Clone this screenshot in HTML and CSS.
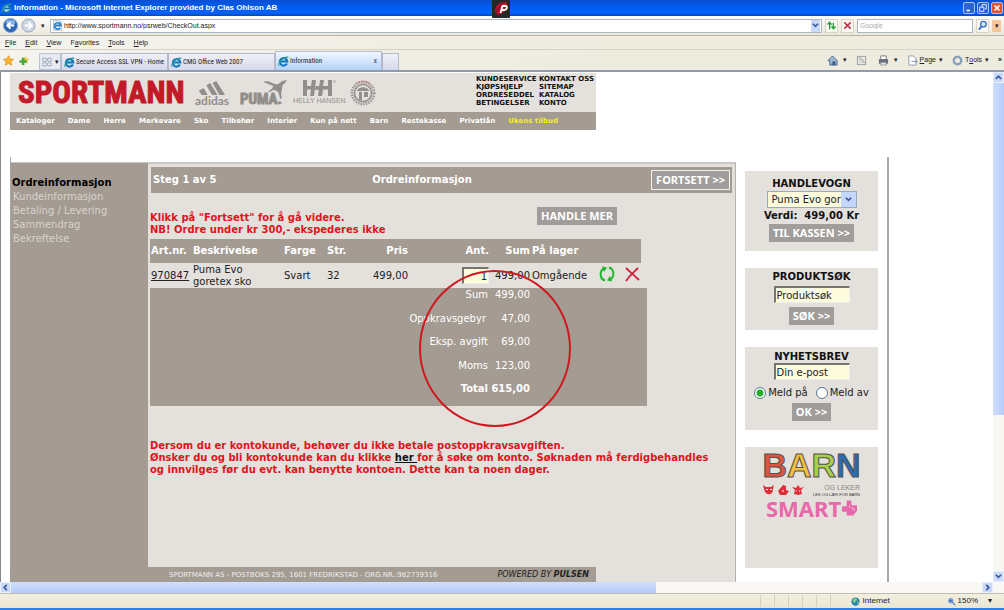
FILE: index.html
```html
<!DOCTYPE html>
<html lang="no">
<head>
<meta charset="utf-8">
<title>Information</title>
<link rel="stylesheet" href="styles.css">
</head>
<body>
<svg class="defs" aria-hidden="true">
  <symbol id="ie" viewBox="0 0 16 16"><path d="M2 1h9l3 3v11H2z" fill="#fff" stroke="#9aa9b8"/><path d="M12 11.2a4.600 4.600 0 1 1 .8-3.200H4.500" fill="none" stroke="#2382c9" stroke-width="2.600"/><path d="M2 12C4 6 10 2 14 3" fill="none" stroke="#5bb4e8" stroke-width="1.200"/></symbol>
  <symbol id="ie-tab" viewBox="0 0 16 16"><circle cx="8" cy="8.500" r="6" fill="#bfe4f7"/><path d="M13 11a5.500 5.500 0 1 1 .6-3H4" fill="none" stroke="#1675b9" stroke-width="3"/><path d="M1 14C1 8 10 0 15 2" fill="none" stroke="#2b9a9a" stroke-width="1.600"/></symbol>
  <symbol id="caret" viewBox="0 0 8 8"><path d="M1 2l3 3 3-3" fill="none" stroke="#3a5a9a" stroke-width="2"/></symbol>
</svg>

<header class="titlebar">
  <svg class="i12"><use href="#ie-tab"/></svg>
  <span class="titlebar-text">Information - Microsoft Internet Explorer provided by Clas Ohlson AB</span>
  <span class="titlebar-buttons">
    <button class="win" aria-label="Minimize"><svg viewBox="0 0 12 12"><path d="M3 9h4" stroke="#fff" stroke-width="2"/></svg></button>
    <button class="win" aria-label="Restore"><svg viewBox="0 0 12 12"><path d="M5 5V2h5v5H8M2 5h5v5H2z" fill="none" stroke="#fff"/></svg></button>
    <button class="win close" aria-label="Close"><svg viewBox="0 0 12 12"><path d="M3 3l6 6M9 3l-6 6" stroke="#fff" stroke-width="2"/></svg></button>
  </span>
  <svg class="badge" viewBox="0 0 18 18"><rect width="18" height="18" rx="1" fill="#25272b"/><path d="M4 14C1 8 6 2 13 2c3 0 3 5 0 9-3 3-6 4-9 3z" fill="#b5122c"/><path d="M4 13c2-5 5-9 9-11" stroke="#6d0d1c" fill="none"/><path d="M8.500 13l2-7h3c2.500 0 1.500 4-1 4h-2.500" fill="none" stroke="#fff" stroke-width="1.800"/></svg>
</header>

<div class="address-row">
  <button class="nav-back" aria-label="Back"><svg viewBox="0 0 16 16"><circle cx="8" cy="8" r="7.500" fill="#2a66b4" stroke="#88a8d0"/><ellipse cx="8" cy="4.500" rx="5" ry="3" fill="#7fb0e6"/><path d="M12 8H5M8 4.500L4.500 8 8 11.500" fill="none" stroke="#fff" stroke-width="2"/></svg></button>
  <button class="nav-back" aria-label="Forward"><svg viewBox="0 0 16 16"><circle cx="8" cy="8" r="7" fill="#cfd7e4" stroke="#94a4bc"/><path d="M4 8h7M8 4.500L11.500 8 8 11.500" fill="none" stroke="#fff" stroke-width="2"/></svg></button>
  <button class="drop" aria-label="Recent pages">▾</button>
  <div class="address">
    <svg class="i12"><use href="#ie"/></svg>
    <input class="address-input" aria-label="Address" value="http://www.sportmann.no/psrweb/CheckOut.aspx">
    <button class="caret-button" aria-label="Show addresses"><svg viewBox="0 0 8 8"><use href="#caret"/></svg></button>
  </div>
  <button class="tool" aria-label="Refresh"><svg viewBox="0 0 12 12"><path d="M4 10V3M1.500 5L4 2.500 6 5M8 3v6M6 7l2 2.500L10.500 7" fill="none" stroke="#2f9a3a" stroke-width="1.500"/></svg></button>
  <button class="tool" aria-label="Stop"><svg viewBox="0 0 12 12"><path d="M2.500 2.500l7 7M9.500 2.500l-7 7" stroke="#c8324a" stroke-width="1.800"/></svg></button>
  <input class="search" aria-label="Search" placeholder="Google">
  <button class="tool" aria-label="Search web"><svg viewBox="0 0 12 12"><circle cx="7" cy="4.500" r="3" fill="#d7e8fb" stroke="#3a6fc4" stroke-width="1.500"/><path d="M5 7L2 10.500" stroke="#3a6fc4" stroke-width="2"/></svg></button>
  <button class="orange" aria-label="Search options">▾</button>
</div>

<nav class="menu-row" aria-label="Menu">
  <button><u>F</u>ile</button><button><u>E</u>dit</button><button><u>V</u>iew</button><button>F<u>a</u>vorites</button><button><u>T</u>ools</button><button><u>H</u>elp</button>
</nav>

<div class="tab-row">
  <div class="favs">
    <svg viewBox="0 0 12 12"><path d="M6 .8l1.600 3.500 3.900.4-2.900 2.600.8 3.900L6 9.200l-3.400 2 .8-3.900L.5 4.700l3.900-.4z" fill="#fdb62c" stroke="#d88a17" stroke-width=".8"/></svg>
    <svg viewBox="0 0 12 12"><path d="M7 .8l1.300 3 3.200.3-2.400 2.200.7 3.200L7 8 4.200 9.500l.7-3.200L2.500 4.100l3.200-.3z" fill="#f6c945"/><path d="M4.500 3v8M.5 7h8" stroke="#43a63c" stroke-width="2.800"/></svg>
  </div>
  <div class="quick"><svg viewBox="0 0 12 12"><path d="M1 1.500h4v3.500H1zM7 1.500h4v3.500H7zM1 7h4v3.500H1zM7 7h4v3.500H7z" fill="#fff" stroke="#8d9ab0"/></svg><span>▾</span></div>
  <button class="tab"><svg class="i12"><use href="#ie-tab"/></svg>Secure Access SSL VPN - Home</button>
  <button class="tab"><svg class="i12"><use href="#ie-tab"/></svg>CMG Office Web 2007</button>
  <button class="tab active"><svg class="i12"><use href="#ie-tab"/></svg>Information<span class="tab-close">x</span></button>
  <button class="tab new" aria-label="New tab"></button>
  <div class="commands">
    <button aria-label="Home"><svg viewBox="0 0 12 12"><path d="M1 6l5-5 5 5v5H3V6z" fill="#9db7d4" stroke="#4a6587"/><path d="M6 7h3v4H6z" fill="#32577f"/></svg><span>▾</span></button>
    <button class="faded" aria-label="Feeds"><svg viewBox="0 0 12 12"><rect x="1.500" y="1.500" width="9" height="9" fill="#eee" stroke="#888"/><path d="M3 5c3 0 4 2 4 4M3 3c4 0 6 3 6 6M3.500 8.500h1" fill="none" stroke="#888"/></svg></button>
    <button aria-label="Print"><svg viewBox="0 0 12 12"><path d="M3 1h6v4H3z" fill="#fff" stroke="#777"/><path d="M1 4.500h10v5H1z" fill="#68707d"/><path d="M3 8h6v3H3z" fill="#dfe7f2" stroke="#777" stroke-width=".7"/></svg><span>▾</span></button>
    <button><svg viewBox="0 0 12 12"><path d="M2 1h5l3 3v7H2z" fill="#fff" stroke="#8d99ab"/><path d="M5 7h6M9 5l2 2-2 2" fill="none" stroke="#7a93b5"/></svg><u>P</u>age<span>▾</span></button>
    <button><svg viewBox="0 0 12 12"><circle cx="6" cy="6" r="4" fill="none" stroke="#8aa0bd" stroke-width="2.500"/><circle cx="6" cy="6" r="5" fill="none" stroke="#8aa0bd" stroke-dasharray="2 1.900"/></svg>T<u>o</u>ols<span>▾</span></button>
    <button class="more" aria-label="More">»</button>
  </div>
</div>

<div class="viewport">
<main class="page">
  <header class="site-head">
    <div class="brands">
      <span class="logo">SPORTMANN</span>
      <div class="brand adidas"><svg viewBox="0 0 34 16"><path d="M11 4.500l4-2.300L23 15h-6zM17.500 2l4-2L31 15h-6zM3 10.500l5-3L12.500 15H6z" fill="#918e8b"/></svg><span>adidas</span></div>
      <div class="brand puma"><span>PUMA.</span><svg viewBox="0 0 24 20"><path d="M0 2c5-2 8 1 12 2 3 1 5-1 7-3l5-1-2 3c-3 2-3 4-3 6l-1 5 1 4-2 1-1-5c-1-3-3-4-6-4l-3 2H5l2-2c2-1 3-2 3-4C7 5 4 3 0 2z" fill="#918e8b"/></svg></div>
      <div class="brand helly"><svg viewBox="0 0 34 16"><path d="M1 0h4v6h4l1-6h4l-2 16H8l1-6.500H5V16H1zM18 0h4l-1 6h5V0h4v16h-4V9.500h-5L20 16h-4zM12 10l2-4h4l-1 3.500z" fill="#918e8b"/><circle cx="32.500" cy="1.500" r="1" fill="none" stroke="#918e8b" stroke-width=".6"/></svg><span>HELLY HANSEN</span></div>
      <svg class="seal" viewBox="0 0 26 26"><circle cx="13" cy="13" r="11" fill="none" stroke="#a19d99" stroke-width="3" stroke-dasharray="1.600 1"/><circle cx="13" cy="13" r="8.500" fill="#e4e0dc" stroke="#918e8b" stroke-width="1.500"/><path d="M7 11c1-5 11-5 12 0zM9 12h3v8H9zM14 12h4v5h-4z" fill="#918e8b"/><path d="M6 3.500C9 .8 17 .8 20 3.500" fill="none" stroke="#d6868b" stroke-width="1.300" stroke-dasharray="2 1"/></svg>
      <nav class="service" aria-label="Service">
        <a href="#">KUNDESERVICE</a><a href="#">KONTAKT OSS</a>
        <a href="#">KJØPSHJELP</a><a href="#">SITEMAP</a>
        <a href="#">ORDRESEDDEL</a><a href="#">KATALOG</a>
        <a href="#">BETINGELSER</a><a href="#">KONTO</a>
      </nav>
    </div>
    <nav class="site-nav" aria-label="Shop">
      <a href="#">Kataloger</a><a href="#">Dame</a><a href="#">Herre</a><a href="#">Merkevare</a><a href="#">Sko</a><a href="#">Tilbehør</a><a href="#">Interiør</a><a href="#">Kun på nett</a><a href="#">Barn</a><a href="#">Restekasse</a><a href="#">Privatlån</a><a class="deal" href="#">Ukens tilbud</a>
    </nav>
  </header>

  <div class="columns">
    <nav class="steps" aria-label="Steps">
      <strong>Ordreinformasjon</strong>
      <span>Kundeinformasjon</span><span>Betaling / Levering</span><span>Sammendrag</span><span>Bekreftelse</span>
    </nav>

    <section class="checkout">
      <div class="step-bar"><span>Steg 1 av 5</span><span>Ordreinformasjon</span><button class="btn outlined">FORTSETT &gt;&gt;</button></div>
      <div class="notice-row">
        <p class="notice">Klikk på "Fortsett" for å gå videre.<br>NB! Ordre under kr 300,- ekspederes ikke</p>
        <button class="btn">HANDLE MER</button>
      </div>
      <div class="order">
        <table class="items">
          <colgroup><col class="c-art"><col class="c-desc"><col class="c-color"><col class="c-size"><col class="c-price"><col class="c-qty"><col class="c-sum"><col class="c-stock"><col class="c-icon"><col class="c-icon"></colgroup>
          <thead><tr><th>Art.nr.</th><th>Beskrivelse</th><th>Farge</th><th>Str.</th><th class="num">Pris</th><th class="num">Ant.</th><th class="num">Sum</th><th>På lager</th><th></th><th></th></tr></thead>
          <tbody><tr><td><a href="#">970847</a></td><td>Puma Evo<br>goretex sko</td><td>Svart</td><td>32</td><td class="num">499,00</td><td class="num"><input class="field qty" aria-label="Antall" value="1"></td><td class="num">499,00</td><td>Omgående</td>
          <td class="mid"><button class="icon" aria-label="Oppdater"><svg viewBox="0 0 16 18"><path d="M6 15.500C1 14 0 7 4.500 3.500M10 2.500c5 1.500 6 8.500 1.500 12" fill="none" stroke="#1fb52c" stroke-width="2"/><path d="M3 1.500l5 1-3 4.500zM13 16.500l-5-1 3-4.500z" fill="#1fb52c"/></svg></button></td>
          <td class="mid"><button class="icon" aria-label="Slett"><svg viewBox="0 0 16 18"><path d="M2 3c4 4 8 7 13 12M14 3C10 7 6 10 2 16" fill="none" stroke="#cf1f3a" stroke-width="1.800"/></svg></button></td></tr></tbody>
        </table>
        <table class="totals">
          <tbody>
            <tr><th>Sum</th><td>499,00</td></tr>
            <tr><th class="inset">Oppkravsgebyr</th><td>47,00</td></tr>
            <tr><th>Eksp. avgift</th><td>69,00</td></tr>
            <tr><th>Moms</th><td>123,00</td></tr>
            <tr class="grand"><th>Total</th><td>615,00</td></tr>
          </tbody>
        </table>
        <div class="ring"></div>
      </div>
      <p class="notice account">Dersom du er kontokunde, behøver du ikke betale postoppkravsavgiften.<br>Ønsker du og bli kontokunde kan du klikke <a href="#">her </a>for å søke om konto. Søknaden må ferdigbehandles<br>og innvilges før du evt. kan benytte kontoen. Dette kan ta noen dager.</p>
    </section>

    <aside class="side">
      <section class="card cart">
        <h2>HANDLEVOGN</h2>
        <div class="picker"><select aria-label="Varer i handlevogn"><option>Puma Evo gor</option></select><svg viewBox="0 0 8 8"><use href="#caret"/></svg></div>
        <strong class="worth">Verdi: &nbsp;499,00 Kr</strong>
        <button class="btn">TIL KASSEN &gt;&gt;</button>
      </section>
      <section class="card find">
        <h2><label for="q">PRODUKTSØK</label></h2>
        <input class="field" id="q" value="Produktsøk">
        <button class="btn">SØK &gt;&gt;</button>
      </section>
      <section class="card news">
        <h2><label for="mail">NYHETSBREV</label></h2>
        <input class="field" id="mail" value="Din e-post">
        <div class="radios"><label><input type="radio" name="n" checked>Meld på</label><label><input type="radio" name="n">Meld av</label></div>
        <button class="btn">OK &gt;&gt;</button>
      </section>
      <section class="card promo">
        <div class="barn"><span class="b1">B</span><span class="b2">A</span><span class="b3">R</span><span class="b4">N</span></div>
        <div class="leker">
          <svg viewBox="0 0 42 12"><g fill="#dd2f39"><path d="M0 1l3 2h5l3-2-1 4c0 7-8 7-9 0zM15 7l5-6 3 1v4l3 1-3 4h-6zM29 3l4 1 2-3 2 3 4-1-3 3 1 4-4 1-4-1 1-4z"/></g><path d="M3 5.500h2M7 5.500h2M19 7h2M33 7h1M36 7h1" stroke="#fff"/></svg>
          <div><b>OG LEKER</b><i>LEK OG LÆR FOR BARN</i></div>
        </div>
        <div class="smart">SMART<svg viewBox="0 0 16 16"><path d="M5 0h5v5h6v6l-4 5H5v-4H0V6h5z" fill="#e968aa"/><path d="M8 5v3M11 7v3M13 8v3" stroke="#f7bfdc"/></svg></div>
      </section>
    </aside>
  </div>

  <footer class="site-foot"><span>SPORTMANN AS - POSTBOKS 295, 1601 FREDRIKSTAD - ORG.NR.:982739316</span><em>POWERED BY <b>PULSEN</b></em></footer>
</main>
<div class="vscroll"><span class="arrow"><svg viewBox="0 0 8 8"><path d="M1 5.500l3-3 3 3" fill="none" stroke="#3a5a9a" stroke-width="2"/></svg></span><span class="thumb"></span><span class="arrow"><svg viewBox="0 0 8 8"><use href="#caret"/></svg></span></div>
</div>

<div class="hscroll"><span class="arrow"><svg viewBox="0 0 8 8"><path d="M5.500 1l-3 3 3 3" fill="none" stroke="#3a5a9a" stroke-width="2"/></svg></span><span class="hthumb"></span><span class="arrow"><svg viewBox="0 0 8 8"><path d="M2.500 1l3 3-3 3" fill="none" stroke="#3a5a9a" stroke-width="2"/></svg></span></div>

<footer class="status">
  <div class="cells"><i></i><i></i><i></i><i></i><i></i><i></i></div>
  <span class="zone"><svg viewBox="0 0 12 12"><circle cx="6" cy="6" r="5.500" fill="#2b7fae"/><path d="M2 4c2-3 5-3 6-1S5 6 5 8 2 6 2 4zM8 7l3-1-2 4z" fill="#7ccf86"/></svg>Internet</span>
  <button class="zoom"><svg viewBox="0 0 12 12"><circle cx="5" cy="5" r="3" fill="#bcd9f5" stroke="#3a6fc4"/><path d="M7 7l4 4M5 3v4M3 5h4" stroke="#2f62b5" stroke-width="1.400"/></svg>150%<span>▾</span></button>
</footer>
</body>
</html>
```
FILE: styles.css
```css
* { box-sizing: border-box; }
body {
  margin: 0; height: 100vh; min-height: 600px; display: flex; flex-direction: column; overflow: hidden;
  background: #eeebdf; color: #222; font: 10px/12px "DejaVu Sans", Verdana, sans-serif;
  border-bottom: 2px solid #2f7fe8;
}
button, input, select { font: inherit; color: inherit; margin: 0; }
button { border: 0; padding: 0; background: none; }
h2, p { margin: 0; }
svg { display: block; flex: none; }
.defs { position: absolute; width: 0; height: 0; }
.i12 { width: 11px; height: 11px; }

.titlebar, .address-row, .menu-row, .tab-row, .status { font-family: "Liberation Sans", Arial, sans-serif; font-size: 7px; line-height: 10px; flex: none; }
.titlebar {
  position: relative; height: 16px; display: flex; align-items: center; gap: 2px; padding: 0 1px;
  background: linear-gradient(#0a4fd0, #0058ea 30%, #0463fa 80%, #0347c4); color: #fff;
}
.titlebar-text { flex: 1; font: bold 8px/12px "Liberation Sans", Arial, sans-serif; }
.titlebar-buttons { display: flex; gap: 2px; }
.win { width: 12px; height: 12px; border: 1px solid #a9c4f5; border-radius: 2px; background: #2c62dc; }
.win svg { width: 10px; height: 10px; }
.close { background: #e0532d; }
.badge { position: absolute; left: 49%; top: 0; width: 18px; height: 18px; z-index: 2; }

.address-row { height: 20px; display: flex; align-items: center; gap: 3px; padding: 0 3px; background: linear-gradient(#fbfbf8, #ece9dc); border-bottom: 1px solid #b9b6a9; }
.nav-back svg { width: 15px; height: 15px; }
.drop { width: 8px; }
.address { flex: 1; height: 14px; display: flex; align-items: center; background: #fff; border: 1px solid #aab6c4; padding: 0 1px; }
.address-input { flex: 1; border: 0; padding: 0 1px; height: 12px; background: none; }
.caret-button { width: 9px; height: 12px; background: #c9d9fa; }
.caret-button svg { width: 7px; height: 7px; margin: auto; }
.tool { width: 13px; height: 14px; border: 1px solid #d8d5c6; background: #faf9f4; }
.tool svg { width: 11px; height: 11px; }
.search { width: 116px; height: 14px; border: 1px solid #aab6c4; background: #fff; padding: 0 2px; }
.search::placeholder { color: #aaa; }
.orange { width: 9px; height: 12px; background: #f5c79b; }

.menu-row { height: 14px; display: flex; align-items: center; gap: 9px; padding: 0 5px; border-bottom: 1px solid #d5d2c6; background: linear-gradient(90deg, #f4f3ee, #eeebdf 60%); }
.tab-row { height: 22px; display: flex; align-items: flex-end; padding-left: 3px; border-bottom: 2px solid #929bad; background: linear-gradient(90deg, #f4f3ee, #eeebdf 60%); }
.favs { display: flex; gap: 5px; width: 36px; align-self: center; }
.favs svg { width: 11px; height: 11px; }
.quick { width: 22px; height: 17px; display: flex; align-items: center; justify-content: space-around; border: 1px solid #bdc3d0; background: #e7e9f3; }
.quick svg { width: 10px; height: 10px; }
.tab { flex: 0 1 107px; min-width: 0; height: 17px; display: flex; align-items: center; gap: 1px; padding: 0 1px 0 2px; background: linear-gradient(#f0f0f8, #d6d9ec); border: 1px solid #b4b9cb; border-bottom: 0; font-family: "Roboto Condensed", "Arial Narrow", sans-serif; font-size: 7px; white-space: nowrap; }
.tab.active { height: 19px; background: linear-gradient(#f2f8ff, #b5d2fa); }
.tab.new { flex-basis: 17px; }
.tab-close { margin-left: auto; padding-right: 3px; color: #667; font-weight: bold; }
.commands { margin-left: auto; display: flex; gap: 9px; align-self: center; align-items: center; }
.commands button { display: flex; align-items: center; }
.commands svg { width: 11px; height: 11px; margin-right: 2px; }
.commands span { margin-left: 3px; }
.faded { opacity: .8; }
.commands .more { font-weight: bold; align-self: flex-start; padding-right: 2px; }

.viewport { flex: 1; min-height: 0; display: flex; background: #fff; border-left: 1px solid #85888f; }
.page { flex: 1; min-width: 0; display: flex; flex-direction: column; padding: 1px 0 0 9px; overflow: hidden; position: relative; }
.site-head { width: 586px; flex: none; }
.brands { height: 39px; background: #e4e0dc; display: flex; align-items: center; color: #918e8b; padding-left: 8px; }
.logo { width: 177px; font: bold 31px/36px "Liberation Sans Narrow", "Arial Narrow", "Roboto Condensed", sans-serif; color: #c21a28; -webkit-text-stroke: 1px #c21a28; }
.brand span { display: block; font: bold 11px/10px "Liberation Sans", Arial, sans-serif; }
.adidas { width: 45px; }
.adidas svg { width: 34px; height: 15px; }
.brand.adidas span { font: bold 12px/9px Lato, sans-serif; }
.puma { width: 53px; display: flex; align-items: flex-end; }
.brand.puma span { flex: none; width: 42px; font: bold 15px/13px "Roboto Condensed", sans-serif; -webkit-text-stroke: 1px #918e8b; }
.puma svg { width: 24px; height: 20px; margin: 0 0 6px -19px; }
.helly { width: 57px; }
.helly svg { width: 34px; height: 16px; margin-left: 9px; }
.brand.helly span { font: 7px/9px "Liberation Sans", sans-serif; white-space: nowrap; }
.seal { width: 26px; height: 26px; }
.service { margin-left: auto; width: 120px; display: grid; grid-template-columns: 63px 1fr; font: bold 7px/8px "DejaVu Sans", Verdana, sans-serif; white-space: nowrap; padding-bottom: 3px; }
.service a { color: #111; text-decoration: none; }
.site-nav { height: 18px; padding: 0 38px 0 6px; display: flex; align-items: center; justify-content: space-between; background: #a49b92; font: bold 7px/10px "DejaVu Sans", Verdana, sans-serif; white-space: nowrap; }
.site-nav a { color: #fff; text-decoration: none; }
.site-nav .deal { color: #f4ee1c; }

.columns { flex: 1; min-height: 421px; margin-top: 27px; display: grid; grid-template-columns: 138px 587px 153px; border-left: 1px solid #a9a5a0; margin-right: auto; }
.steps { margin-top: 5px; padding: 13px 1px; display: flex; flex-direction: column; background: #a49b92; color: #d8d3cd; line-height: 14px; border-top: 1px solid #c9c5c0; }
.steps span { padding-left: 1px; }
.steps strong { color: #000; }
.checkout { margin: 5px 0 0 -1px; padding: 3px 3px 0 2px; background: #e4e0dc; border-top: 2px solid #cbc8c4; border-right: 1px solid #b5b2ae; }
.step-bar { height: 26px; margin-left: 1px; padding: 0 2px; display: grid; grid-template-columns: 38% 1fr auto; align-items: center; background: #a49b92; color: #fff; font-weight: bold; }
.btn { height: 18px; padding: 0 4px; background: #a09d9a; color: #fff; font: bold 11px/16px "Noto Sans", "Open Sans", sans-serif; white-space: nowrap; }
.outlined { border: 1px solid #f4f2f0; height: 20px; }
.notice { font-weight: bold; color: #e0141c; white-space: nowrap; }
.notice a { color: #111; }
.notice-row { display: flex; justify-content: space-between; padding: 14px 115px 0 0; height: 46px; }
.notice-row .notice { padding-top: 5px; }
.order { position: relative; width: 497px; }
.items { width: 491px; table-layout: fixed; border-collapse: collapse; }
.items th, .items td { padding: 0 1px; text-align: left; white-space: nowrap; }
.items th { height: 24px; background: #a49b92; color: #fff; }
.items td { height: 25px; }
.items a { color: #222; }
.items .num, .items .mid { text-align: right; }
.c-art { width: 42px; } .c-desc { width: 91px; } .c-color { width: 43px; } .c-size { width: 38px; } .c-price { width: 45px; }
.c-qty { width: 81px; } .c-sum { width: 41px; } .c-stock { width: 60px; }
.icon svg { width: 16px; height: 18px; }
.field { height: 17px; border: 1px solid; border-color: #77736e #eee #eee #77736e; border-top-width: 2px; border-left-width: 2px; background: #fcfbdc; padding: 0 1px; }
.qty { width: 27px; text-align: right; }
.totals { width: 497px; height: 118px; border-collapse: collapse; background: #a49b92; color: #fff; }
.totals th, .totals td { height: 23px; padding: 1px 1px 0; text-align: right; vertical-align: top; font-weight: normal; }
.totals th { width: 339px; }
.totals .inset { padding-right: 3px; }
.totals td { padding-right: 117px; }
.totals .grand th, .totals .grand td { font-weight: bold; }
.ring { position: absolute; left: 269px; top: 31px; width: 152px; height: 157px; border: 2px solid #d01820; border-radius: 50%; pointer-events: none; }
.account { margin-top: 34px; }

.side { margin-left: -1px; padding: 14px 9px 0 10px; display: flex; flex-direction: column; gap: 17px; border-right: 2px solid #aaa8a6; }
.card { display: flex; flex-direction: column; align-items: center; background: #e4e0dc; }
.card h2 { font: bold 10px/12px "DejaVu Sans", Verdana, sans-serif; color: #111; }
.cart { height: 80px; padding-top: 7px; }
.picker { position: relative; width: 90px; height: 17px; margin-top: 1px; }
.picker select { appearance: none; width: 100%; height: 100%; padding: 0 4px; border: 1px solid #9aa9c0; border-radius: 0; background: #fcfbdc; }
.picker svg { position: absolute; right: 1px; top: 1px; width: 15px; height: 15px; padding: 4px; background: #c4d6fb; pointer-events: none; }
.worth { line-height: 15px; color: #111; white-space: nowrap; }
.cart .btn { margin-top: 1px; }
.find { height: 62px; padding-top: 3px; }
.find .field, .news .field { width: 76px; }
.find .field { margin-top: 3px; }
.find .btn { margin-top: 4px; }
.news { height: 83px; padding-top: 4px; }
.radios { display: flex; gap: 8px; margin: 7px 0 4px; white-space: nowrap; }
.radios label { display: flex; align-items: center; gap: 2px; }
.radios input { appearance: none; width: 12px; height: 12px; border: 1px solid #557894; border-radius: 50%; background: #fff; }
.radios input:checked { background: radial-gradient(circle, #25ad2a 0 3px, #fff 4px); }
.promo { height: 121px; }
.barn { font: bold 34px/37px "Liberation Sans", Arial, sans-serif; -webkit-text-stroke: 1px #54504c; height: 37px; }
.b1 { color: #e0533f; } .b2 { color: #f5c13c; } .b3 { color: #a5d04b; } .b4 { color: #2b6cb5; }
.leker { width: 97px; display: flex; justify-content: space-between; }
.leker svg { width: 42px; height: 12px; }
.leker b, .leker i { display: block; font: 7px/8px "Liberation Sans", sans-serif; color: #8a8784; text-align: right; white-space: nowrap; }
.leker i { font-size: 4px; line-height: 5px; color: #333; }
.smart { display: flex; align-items: center; gap: 1px; font: bold 22px/22px "Noto Sans", sans-serif; color: #e968aa; }
.smart svg { width: 15px; height: 16px; }

.site-foot { position: absolute; left: 9px; bottom: 0; width: 586px; height: 15px; display: flex; align-items: center; justify-content: space-between; padding: 0 7px 0 159px; background: #a49b92; color: #eee; font-size: 7px; white-space: nowrap; }
.site-foot em { color: #222; font: italic 8px/12px "DejaVu Sans", sans-serif; }

.arrow { flex: none; width: 11px; height: 11px; display: grid; place-items: center; background: #c9d9fb; border: 1px solid #e9effc; }
.arrow svg { width: 7px; height: 7px; }
.vscroll { width: 11px; flex: none; display: flex; flex-direction: column; justify-content: space-between; background: #f7f6f0; }
.thumb { flex: 0 0 65%; margin-bottom: auto; background: linear-gradient(90deg, #cfdefd, #b5ccfa); }
.hscroll { height: 11px; flex: none; display: flex; background: #f9f8f4; padding-right: 11px; }
.hthumb { width: 65%; margin-right: auto; background: linear-gradient(#cfdefd, #b5ccfa); }
.status { height: 15px; display: flex; align-items: center; justify-content: flex-end; padding-right: 12px; border-top: 1px solid #c0bdaf; background: linear-gradient(#f2efdf, #e9e6d4); }
.cells { display: flex; gap: 13px; margin-right: 20px; }
.cells i { width: 1px; height: 12px; background: #d2cfc0; }
.zone { width: 96px; display: flex; align-items: center; gap: 3px; font-size: 8px; }
.zone svg, .zoom svg { width: 9px; height: 9px; }
.zoom { display: flex; align-items: center; gap: 2px; font-size: 8px; }
.zoom span { margin-left: 8px; }
```
